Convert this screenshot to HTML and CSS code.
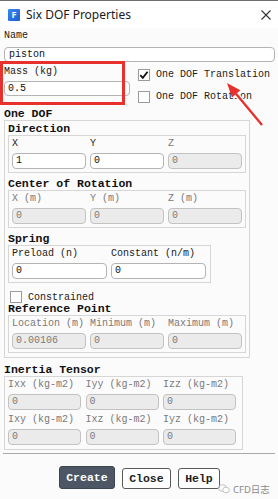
FILE: index.html
```html
<!DOCTYPE html>
<html>
<head>
    <title>Six DOF Properties</title>
    <meta name="viewport" content="width=device-width, initial-scale=1">
    <link rel="stylesheet" href="styles.css">
</head>
<body>
    <div class="window">
        <div class="titlebar">
            <span class="app-icon">F</span>
            <span class="title">Six DOF Properties</span>
            <svg class="close" width="10" height="10" viewBox="0 0 10 10">
                <path d="M0.5 0.5 L9.5 9.5 M9.5 0.5 L0.5 9.5" stroke="#333" stroke-width="1.1" fill="none"/>
            </svg>
        </div>

        <div class="content">
            <div class="label name-label">Name</div>
            <div class="field name-field">piston</div>

            <div class="mass-row">
                <div class="mass-col">
                    <div class="label">Mass (kg)</div>
                    <div class="field mass-field">0.5</div>
                </div>
                <div class="check-col">
                    <div class="check">
                        <span class="box">
                            <svg width="12" height="12" viewBox="0 0 12 12">
                                <path d="M2.3 6.2 L4.8 8.8 L9.6 2.8" stroke="#111" stroke-width="1.8" fill="none"/>
                            </svg>
                        </span>
                        One DOF Translation
                    </div>
                    <div class="check"><span class="box"></span>One DOF Rotation</div>
                </div>
            </div>

            <div class="heading">One DOF</div>
            <div class="group outer">
                <div class="heading">Direction</div>
                <div class="group grid3">
                    <div class="label">X</div>
                    <div class="label">Y</div>
                    <div class="label off">Z</div>
                    <div class="field">1</div>
                    <div class="field">0</div>
                    <div class="field off">0</div>
                </div>

                <div class="heading gap">Center of Rotation</div>
                <div class="group grid3">
                    <div class="label off">X (m)</div>
                    <div class="label off">Y (m)</div>
                    <div class="label off">Z (m)</div>
                    <div class="field off">0</div>
                    <div class="field off">0</div>
                    <div class="field off">0</div>
                </div>

                <div class="heading gap">Spring</div>
                <div class="group grid2">
                    <div class="label">Preload (n)</div>
                    <div class="label">Constant (n/m)</div>
                    <div class="field">0</div>
                    <div class="field">0</div>
                </div>

                <div class="check constrained"><span class="box"></span>Constrained</div>

                <div class="heading">Reference Point</div>
                <div class="group grid3">
                    <div class="label off">Location (m)</div>
                    <div class="label off">Minimum (m)</div>
                    <div class="label off">Maximum (m)</div>
                    <div class="field off">0.00106</div>
                    <div class="field off">0</div>
                    <div class="field off">0</div>
                </div>
            </div>

            <div class="heading inertia-head">Inertia Tensor</div>
            <div class="group inertia">
                <div class="label off">Ixx (kg-m2)</div>
                <div class="label off">Iyy (kg-m2)</div>
                <div class="label off">Izz (kg-m2)</div>
                <div class="field off">0</div>
                <div class="field off">0</div>
                <div class="field off">0</div>
                <div class="label off second">Ixy (kg-m2)</div>
                <div class="label off second">Ixz (kg-m2)</div>
                <div class="label off second">Iyz (kg-m2)</div>
                <div class="field off">0</div>
                <div class="field off">0</div>
                <div class="field off">0</div>
            </div>

            <div class="separator"></div>

            <div class="buttons">
                <button class="button primary">Create</button>
                <button class="button">Close</button>
                <button class="button">Help</button>
            </div>
        </div>

        <!-- annotation drawn over the dialog -->
        <div class="red-box"></div>
        <svg class="arrow" width="50" height="54" viewBox="0 0 50 54">
            <path d="M16 16.8 L42 48" stroke="#fff" stroke-width="5" fill="none"/>
            <path d="M16 16.8 L42 48" stroke="#e8302c" stroke-width="2.4" fill="none"/>
            <polygon points="7,6 20.3,13.2 12,20.5" fill="#e8302c"/>
        </svg>

        <div class="watermark">
            <svg width="12" height="10" viewBox="0 0 12 10">
                <ellipse cx="4.5" cy="4" rx="4" ry="3.3" stroke="#bbb" stroke-width="0.9" fill="none"/>
                <ellipse cx="8" cy="6" rx="3.3" ry="2.8" stroke="#bbb" stroke-width="0.9" fill="#fff"/>
            </svg>
            <span>CFD日志</span>
        </div>
    </div>
</body>
</html>
```

FILE: styles.css
```css
body {
    margin: 0;
    background: #fbfbfb;
    font-family: "Liberation Mono", monospace;
    font-size: 10px;
    color: #1c1c1c;
}
.window {
    position: relative;
    width: 278px;
    height: 499px;
    border-top: 1px solid #6e6e6e;
    box-sizing: border-box;
    overflow: hidden;
}
.titlebar {
    height: 27px;
    display: flex;
    align-items: center;
    padding: 0 8px;
    background: #fff;
}
.app-icon {
    width: 12px;
    height: 12px;
    border-radius: 1px;
    background: linear-gradient(135deg, #3b86f0, #1c5fcf);
    color: #fff;
    font-family: "Noto Sans", sans-serif;
    font-weight: bold;
    font-size: 9px;
    line-height: 12px;
    text-align: center;
}
.title {
    margin-left: 6px;
    font-family: "Noto Sans", sans-serif;
    font-size: 12px;
    color: #1a1a1a;
    flex: 1;
}
.close {
    margin-right: -1px;
}
.content {
    padding: 0 3px 0 4px;
}
.label {
    line-height: 12px;
    white-space: nowrap;
}
.label.off {
    color: #7a7a7a;
}
.name-label {
    margin-top: 2px;
}
.field {
    height: 16px;
    box-sizing: border-box;
    border: 1px solid #b4b4b4;
    border-radius: 4px;
    background: #fff;
    padding: 0 3px;
    line-height: 14px;
    color: #111;
}
.field.off {
    background: #ebebeb;
    border-color: #c2c2c2;
    color: #7c7c7c;
}
.name-field {
    margin-top: 5px;
    height: 15px;
    line-height: 13px;
    padding-left: 4px;
}
.mass-row {
    display: flex;
    height: 46px;
}
.mass-col {
    width: 126px;
    padding-top: 4px;
}
.mass-field {
    margin-top: 3px;
    height: 15px;
    line-height: 13px;
}
.check-col {
    margin-left: 8px;
    padding-top: 6px;
    display: flex;
    flex-direction: column;
    gap: 9px;
}
.check {
    display: flex;
    align-items: center;
    height: 13px;
    white-space: nowrap;
}
.box {
    width: 12px;
    height: 12px;
    box-sizing: border-box;
    border: 1px solid #9a9a9a;
    background: #fff;
    margin-right: 6px;
    display: flex;
}
.box svg {
    margin: -1px;
}
.heading {
    font-weight: bold;
    font-size: 11.5px;
    line-height: 12px;
    color: #111;
    white-space: nowrap;
}
.outer > .heading:first-child {
    margin-top: 2px;
}
.heading.gap {
    margin-top: 5px;
}
.group {
    border: 1px solid #d6d6d6;
}
.outer {
    width: 246px;
    box-sizing: border-box;
    padding: 0 3px 4px;
}
.grid3 {
    display: grid;
    grid-template-columns: repeat(3, 74px);
    column-gap: 4px;
    row-gap: 3px;
    padding: 2px 3px 3px;
}
.grid2 {
    width: 203px;
    box-sizing: border-box;
    display: grid;
    grid-template-columns: repeat(2, 95px);
    column-gap: 4px;
    row-gap: 3px;
    padding: 2px 3px 3px;
}
.constrained {
    margin-top: 8px;
    height: 12px;
    padding-left: 2px;
}
.inertia-head {
    margin-top: 6px;
}
.inertia {
    width: 239px;
    box-sizing: border-box;
    display: grid;
    grid-template-columns: repeat(3, 73px);
    column-gap: 4.5px;
    row-gap: 3px;
    padding: 2px 3px 4px;
}
.inertia .second {
    margin-top: 1px;
}
.separator {
    margin: 3px 0 0 -1px;
    height: 1px;
    background: #a8a8a8;
}
.buttons {
    margin-top: 12px;
    display: flex;
    justify-content: center;
    align-items: flex-end;
    gap: 7.5px;
}
.button {
    height: 21px;
    padding: 0 6px;
    border: 1px solid #5a5a5a;
    border-radius: 3px;
    background: #fff;
    font-family: "Liberation Mono", monospace;
    font-weight: bold;
    font-size: 11.5px;
    color: #222;
    cursor: pointer;
}
.button.primary {
    height: 23px;
    background: #4c5664;
    border-color: #3d4550;
    color: #fff;
}
.red-box {
    position: absolute;
    left: 0;
    top: 60px;
    width: 125px;
    height: 44px;
    box-sizing: border-box;
    border: 3px solid #e8302c;
}
.arrow {
    position: absolute;
    left: 220px;
    top: 76px;
}
.watermark {
    position: absolute;
    left: 218px;
    top: 481px;
    display: flex;
    align-items: center;
    gap: 3px;
    font-family: "Noto Sans", "Noto Sans CJK SC", sans-serif;
    font-size: 9.5px;
    color: #8a8a8a;
}
```
